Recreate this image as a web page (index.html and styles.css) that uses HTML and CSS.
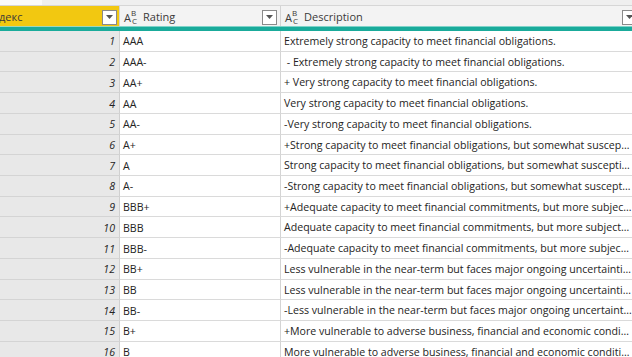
FILE: index.html
```html
<!DOCTYPE html>
<html>
<head>
<meta charset="utf-8">
<link rel="stylesheet" href="styles.css">
</head>
<body>
<div class="topstrip"><div class="topwhite"></div></div>
<div class="grid">
  <div class="hdr hdr-index">
    <span class="hdr-title hdr-cut">декс</span>
    <span class="dd"><svg width="7" height="4" viewBox="0 0 7 4"><path d="M0 0h7L3.5 4z" fill="#555"/></svg></span>
  </div>
  <div class="hdr hdr-rating">
    <span class="abc"><span class="a">A</span><span class="bc"><span class="b">B</span><span class="c">C</span></span></span>
    <span class="hdr-title">Rating</span>
    <span class="dd"><svg width="7" height="4" viewBox="0 0 7 4"><path d="M0 0h7L3.5 4z" fill="#555"/></svg></span>
  </div>
  <div class="hdr hdr-desc">
    <span class="abc"><span class="a">A</span><span class="bc"><span class="b">B</span><span class="c">C</span></span></span>
    <span class="hdr-title">Description</span>
    <span class="dd"><svg width="7" height="4" viewBox="0 0 7 4"><path d="M0 0h7L3.5 4z" fill="#555"/></svg></span>
  </div>
  <div class="teal t-index"></div>
  <div class="teal"></div>
  <div class="teal"></div>

  <div class="c-idx">1</div><div class="c-r">AAA</div><div class="c-d">Extremely strong capacity to meet financial obligations.</div>
  <div class="c-idx">2</div><div class="c-r">AAA-</div><div class="c-d">&nbsp;- Extremely strong capacity to meet financial obligations.</div>
  <div class="c-idx">3</div><div class="c-r">AA+</div><div class="c-d">+ Very strong capacity to meet financial obligations.</div>
  <div class="c-idx">4</div><div class="c-r">AA</div><div class="c-d">Very strong capacity to meet financial obligations.</div>
  <div class="c-idx">5</div><div class="c-r">AA-</div><div class="c-d">-Very strong capacity to meet financial obligations.</div>
  <div class="c-idx">6</div><div class="c-r">A+</div><div class="c-d">+Strong capacity to meet financial obligations, but somewhat susceptible to economic conditions</div>
  <div class="c-idx">7</div><div class="c-r">A</div><div class="c-d">Strong capacity to meet financial obligations, but somewhat susceptible to economic conditions</div>
  <div class="c-idx">8</div><div class="c-r">A-</div><div class="c-d">-Strong capacity to meet financial obligations, but somewhat susceptible to economic conditions</div>
  <div class="c-idx">9</div><div class="c-r">BBB+</div><div class="c-d">+Adequate capacity to meet financial commitments, but more subject to adverse conditions</div>
  <div class="c-idx">10</div><div class="c-r">BBB</div><div class="c-d">Adequate capacity to meet financial commitments, but more subject to adverse conditions</div>
  <div class="c-idx">11</div><div class="c-r">BBB-</div><div class="c-d">-Adequate capacity to meet financial commitments, but more subject to adverse conditions</div>
  <div class="c-idx">12</div><div class="c-r">BB+</div><div class="c-d">Less vulnerable in the near-term but faces major ongoing uncertainties</div>
  <div class="c-idx">13</div><div class="c-r">BB</div><div class="c-d">Less vulnerable in the near-term but faces major ongoing uncertainties</div>
  <div class="c-idx">14</div><div class="c-r">BB-</div><div class="c-d">-Less vulnerable in the near-term but faces major ongoing uncertainties</div>
  <div class="c-idx">15</div><div class="c-r">B+</div><div class="c-d">+More vulnerable to adverse business, financial and economic conditions</div>
  <div class="c-idx">16</div><div class="c-r">B</div><div class="c-d">More vulnerable to adverse business, financial and economic conditions</div>
</div>
</body>
</html>
```
FILE: styles.css
```css
html, body {
  margin: 0;
  padding: 0;
  background: #ffffff;
  overflow: hidden;
  width: 632px;
  height: 357px;
}
body {
  font-family: "Open Sans", "Noto Sans", sans-serif;
  font-size: 10.6px;
  color: #252423;
}
.topstrip {
  height: 5px;
  background: #efefef;
  border-bottom: 1px solid #d6d6d6;
  display: flex;
}
.topwhite {
  width: 42px;
  background: #fafafa;
}
.grid {
  display: grid;
  grid-template-columns: 120px 161px 360px;
  grid-auto-rows: 20.72px;
  grid-template-rows: 20px 5px;
  width: 641px;
}
.hdr {
  display: flex;
  align-items: center;
  background: #f3f3f3;
  border-right: 1px solid #d4d4d4;
  padding-left: 4px;
  padding-right: 3px;
  overflow: hidden;
  white-space: nowrap;
}
.hdr-index {
  background: #f2c811;
  padding-left: 0;
  padding-right: 2px;
}
.hdr-title {
  font-size: 11px;
  color: #3b3a39;
  flex: 1;
  padding-top: 1px;
}
.hdr-cut {
  margin-left: -1px;
}
.abc {
  display: inline-flex;
  align-items: center;
  color: #3b3a39;
  margin-right: 6px;
  flex: none;
  height: 20px;
}
.abc .a {
  font-size: 11px;
  line-height: 11px;
  padding-top: 3px;
}
.abc .bc {
  display: flex;
  flex-direction: column;
  font-size: 8px;
  line-height: 8px;
  padding-top: 1px;
}
.abc .b {
  display: block;
  height: 8px;
}
.abc .c {
  display: block;
  height: 8px;
  padding-left: 1px;
}
.dd {
  width: 13px;
  height: 13px;
  border: 1px solid #8a8a8a;
  background: #ffffff;
  display: flex;
  align-items: center;
  justify-content: center;
  flex: none;
  margin-top: 2px;
}
.teal {
  background: #1aab9b;
  border-top: 1px solid #7fd3c9;
}
.t-index {
  border-top-color: #9fd7b8;
}
.c-idx, .c-r, .c-d {
  border-bottom: 1px solid #dadada;
  display: flex;
  align-items: center;
  white-space: nowrap;
  overflow: hidden;
  box-sizing: border-box;
  padding-top: 1px;
}
.c-idx {
  background: #e8e8e8;
  justify-content: flex-end;
  font-style: italic;
  padding-right: 4px;
  border-right: 1px solid #d0d0d0;
  border-bottom-color: #d4d4d4;
}
.c-r {
  padding-left: 3px;
  border-right: 1px solid #d4d4d4;
}
.c-d {
  display: block;
  line-height: 19px;
  padding-left: 3px;
  padding-right: 9px;
  text-overflow: ellipsis;
}
```
